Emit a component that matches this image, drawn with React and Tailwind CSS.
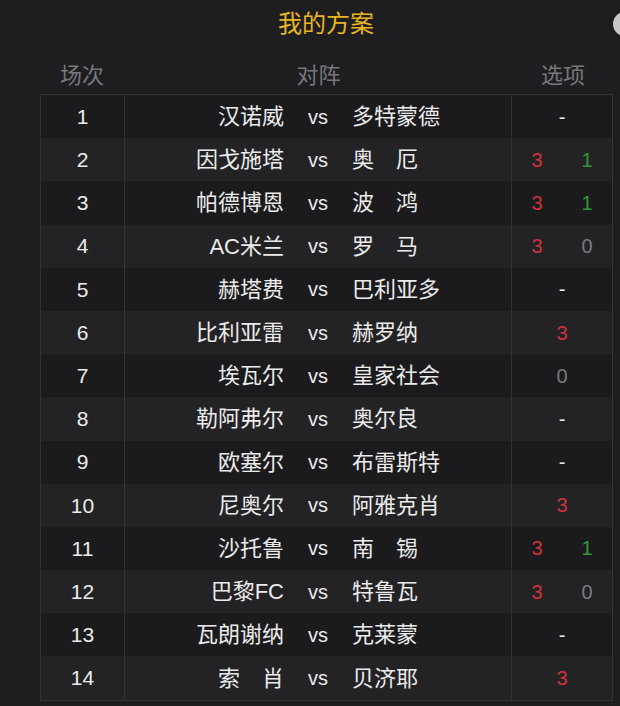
import React from "react";

const rows = [
  [1, "汉诺威", "多特蒙德", ["-"]],
  [2, "因戈施塔", "奥　厄", ["3", "1"]],
  [3, "帕德博恩", "波　鸿", ["3", "1"]],
  [4, "AC米兰", "罗　马", ["3", "0"]],
  [5, "赫塔费", "巴利亚多", ["-"]],
  [6, "比利亚雷", "赫罗纳", ["3"]],
  [7, "埃瓦尔", "皇家社会", ["0"]],
  [8, "勒阿弗尔", "奥尔良", ["-"]],
  [9, "欧塞尔", "布雷斯特", ["-"]],
  [10, "尼奥尔", "阿雅克肖", ["3"]],
  [11, "沙托鲁", "南　锡", ["3", "1"]],
  [12, "巴黎FC", "特鲁瓦", ["3", "0"]],
  [13, "瓦朗谢纳", "克莱蒙", ["-"]],
  [14, "索　肖", "贝济耶", ["3"]],
];

function Val({ v }) {
  const cls =
    v === "3"
      ? "text-[#d0323c]"
      : v === "1"
      ? "text-[#2f9a34]"
      : v === "0"
      ? "text-[#7a7a7c]"
      : "text-[#e6e6e6]";
  return <span className={cls}>{v}</span>;
}

export default function App() {
  return (
    <div
      className="w-[620px] h-[706px] bg-[#1e1e20] overflow-hidden relative"
      style={{ fontFamily: '"Liberation Sans", "Noto Sans CJK SC", sans-serif' }}
    >
      <div className="absolute right-[-17px] top-[12px] w-[24px] h-[24px] rounded-full bg-[#c8c8c8]" />
      <div className="h-[48px] flex items-center justify-center pl-[32px] text-[24px] text-[#e8b524]">
        我的方案
      </div>
      <div className="ml-[40px] w-[573px] h-[46px] pt-[8px] grid grid-cols-[84px_1fr_100px] items-center text-[22px] text-[#77777a]">
        <div className="text-center">场次</div>
        <div className="text-center">对阵</div>
        <div className="text-center">选项</div>
      </div>
      <div className="ml-[40px] w-[573px] border border-[#333336]">
        {rows.map(([n, home, away, vals], i) => (
          <div
            key={n}
            className={`h-[43.2px] grid grid-cols-[84px_1fr_100px] items-center text-[22px] text-[#ebebeb] ${
              i % 2 === 0 ? "bg-[#1b1b1d]" : "bg-[#232325]"
            }`}
          >
            <div className="h-full flex items-center justify-center border-r border-[#333336] text-[21px]">
              {n}
            </div>
            <div className="h-full grid grid-cols-[1fr_auto_1fr] gap-[24px] items-center border-r border-[#333336]">
              <div className="text-right whitespace-nowrap">{home}</div>
              <div className="text-[20px]">vs</div>
              <div className="text-left whitespace-nowrap">{away}</div>
            </div>
            {vals.length === 2 ? (
              <div className="grid grid-cols-2 text-center text-[20px]">
                <Val v={vals[0]} />
                <Val v={vals[1]} />
              </div>
            ) : (
              <div className="text-center text-[20px]">
                <Val v={vals[0]} />
              </div>
            )}
          </div>
        ))}
      </div>
    </div>
  );
}
